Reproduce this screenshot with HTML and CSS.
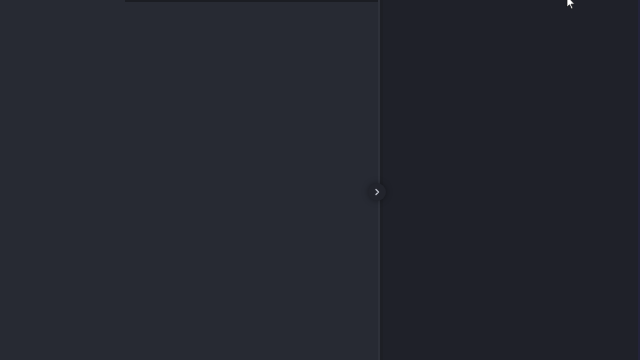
FILE: index.html
```html
<!DOCTYPE html>
<html>
<head>
<meta charset="utf-8">
<link rel="stylesheet" href="styles.css">
</head>
<body>
<div class="app">
  <section class="left">
    <div class="topbar"></div>
  </section>
  <div class="divider">
    <button class="toggle" aria-label="Expand">
      <svg width="8" height="8" viewBox="0 0 8 8"><path d="M3 1.5 L5.5 4 L3 6.5" fill="none" stroke="#b9bcc6" stroke-width="1.4" stroke-linecap="round" stroke-linejoin="round"/></svg>
    </button>
  </div>
  <section class="right"></section>
</div>
<svg class="cursor" width="10" height="12" viewBox="0 0 10 12"><path d="M1 -4 L1 7 L3.5 4.8 L5.5 9 L7 8.3 L5 4.2 L8.5 4 Z" fill="#ffffff" stroke="#111" stroke-width="0.7"/></svg>
</body>
</html>
```
FILE: styles.css
```css
html, body {
  margin: 0;
  padding: 0;
  width: 640px;
  height: 360px;
  overflow: hidden;
  background: #1f2129;
  font-family: "Liberation Sans", sans-serif;
}
.app {
  display: flex;
  width: 640px;
  height: 360px;
}
.left {
  width: 378px;
  height: 100%;
  background: #272a33;
  display: flex;
  flex-direction: column;
  align-items: flex-end;
}
.topbar {
  width: 253px;
  height: 2px;
  background: #1b1d23;
}
.divider {
  position: relative;
  width: 5px;
  height: 100%;
  background: #1d1f25;
  border-left: 2px solid #2e313a;
  box-sizing: border-box;
}
.toggle {
  position: absolute;
  left: -12px;
  top: 183px;
  width: 18px;
  height: 18px;
  border-radius: 50%;
  border: none;
  padding: 0;
  background: #22242c;
  box-shadow: 0 0 6px rgba(0,0,0,0.35);
  display: flex;
  align-items: center;
  justify-content: center;
}
.right {
  flex: 1;
  height: 100%;
  background: #1f2129;
  border-right: 2px solid #23233a;
  box-sizing: border-box;
}
.cursor {
  position: absolute;
  left: 566px;
  top: 0;
}
```
